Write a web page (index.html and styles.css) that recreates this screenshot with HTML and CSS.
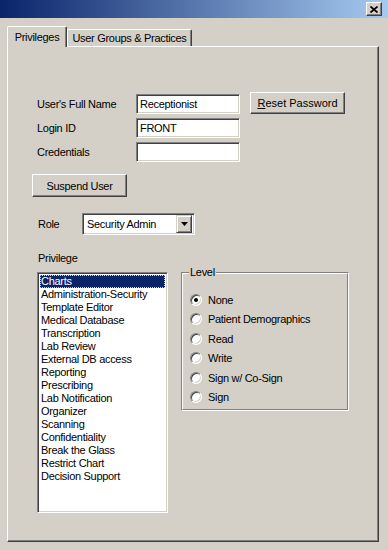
FILE: index.html
```html
<!DOCTYPE html>
<html lang="en">

<head>
    <meta charset="UTF-8">
    <title>User Security</title>
    <link rel="stylesheet" href="styles.css">
</head>

<body>
    <div class="titlebar">
        <div class="close-btn">
            <svg width="8" height="7" viewBox="0 0 8 7">
                <path d="M0.5 0.5 L7.5 6.5 M7.5 0.5 L0.5 6.5" stroke="#000" stroke-width="1.7" fill="none"/>
            </svg>
        </div>
    </div>

    <div class="tabs">
        <div class="tab active">Privileges</div>
        <div class="tab">User Groups &amp; Practices</div>
    </div>

    <div class="panel">
        <div class="fields">
            <label class="field-label">User's Full Name</label>
            <div class="textbox">Receptionist</div>
            <div class="button reset-btn"><u>R</u>eset Password</div>

            <label class="field-label">Login ID</label>
            <div class="textbox">FRONT</div>

            <label class="field-label">Credentials</label>
            <div class="textbox"></div>
        </div>

        <div class="button suspend-btn">Suspend User</div>

        <div class="role-row">
            <label class="role-label">Role</label>
            <div class="combo">
                <span class="combo-text">Security Admin</span>
                <span class="combo-btn">
                    <svg width="7" height="4" viewBox="0 0 7 4"><polygon points="0,0 7,0 3.5,4" fill="#000"/></svg>
                </span>
            </div>
        </div>

        <div class="privilege-label">Privilege</div>

        <div class="lists">
            <ul class="listbox">
                <li class="selected">Charts</li>
                <li>Administration-Security</li>
                <li>Template Editor</li>
                <li>Medical Database</li>
                <li>Transcription</li>
                <li>Lab Review</li>
                <li>External DB access</li>
                <li>Reporting</li>
                <li>Prescribing</li>
                <li>Lab Notification</li>
                <li>Organizer</li>
                <li>Scanning</li>
                <li>Confidentiality</li>
                <li>Break the Glass</li>
                <li>Restrict Chart</li>
                <li>Decision Support</li>
            </ul>

            <div class="group">
                <span class="legend">Level</span>
                <div class="group-inner">
                    <div class="radio-row"><span class="radio checked"><span class="dot"></span></span>None</div>
                    <div class="radio-row"><span class="radio"></span>Patient Demographics</div>
                    <div class="radio-row"><span class="radio"></span>Read</div>
                    <div class="radio-row"><span class="radio"></span>Write</div>
                    <div class="radio-row"><span class="radio"></span>Sign w/ Co-Sign</div>
                    <div class="radio-row"><span class="radio"></span>Sign</div>
                </div>
            </div>
        </div>
    </div>
</body>

</html>
```

FILE: styles.css
```css
body {
    margin: 0;
    width: 388px;
    height: 550px;
    overflow: hidden;
    background-color: #d4d0c8;
    font-family: "Liberation Sans", Arial, sans-serif;
    font-size: 11px;
    letter-spacing: -0.3px;
    color: #000;
}

.titlebar {
    height: 18px;
    background: linear-gradient(to right, #0a246a, #a6caf0);
    display: flex;
    justify-content: flex-end;
    align-items: center;
    padding-right: 6px;
}

.close-btn {
    width: 16px;
    height: 14px;
    box-sizing: border-box;
    background-color: #d4d0c8;
    border: 1px solid;
    border-color: #fff #404040 #404040 #fff;
    box-shadow: inset -1px -1px #808080;
    display: flex;
    justify-content: center;
    align-items: center;
}

.tabs {
    display: flex;
    align-items: flex-end;
    height: 20px;
    margin: 8px 0 0 7px;
}

.tab {
    height: 17px;
    box-sizing: border-box;
    border: 1px solid;
    border-bottom: none;
    border-color: #fff #404040 #404040 #fff;
    box-shadow: inset -1px 0 #808080;
    border-radius: 2px 2px 0 0;
    display: flex;
    align-items: center;
    justify-content: center;
    width: 125px;
    background-color: #d4d0c8;
}

.tab.active {
    width: 60px;
    height: 21px;
    margin-bottom: -1px;
    position: relative;
    z-index: 1;
    padding-bottom: 1px;
}

.panel {
    height: 496px;
    box-sizing: border-box;
    margin: 0 9px 0 7px;
    border: 1px solid;
    border-color: #fff #404040 #404040 #fff;
    box-shadow: inset -1px -1px #808080;
    padding: 47px 0 0 24px;
}

.fields {
    display: grid;
    grid-template-columns: 104px 104px 105px;
    grid-auto-rows: 20px;
    row-gap: 4px;
}

.field-label {
    grid-column: 1;
    padding-left: 5px;
    display: flex;
    align-items: center;
}

.textbox,
.combo,
.listbox {
    box-sizing: border-box;
    background-color: #fff;
    border: 1px solid;
    border-color: #808080 #fff #fff #808080;
    box-shadow: inset 1px 1px #404040, inset -1px -1px #d4d0c8;
}

.textbox {
    grid-column: 2;
    padding-left: 3px;
    display: flex;
    align-items: center;
}

.button {
    box-sizing: border-box;
    border: 1px solid;
    border-color: #fff #404040 #404040 #fff;
    box-shadow: inset -1px -1px #808080;
    display: flex;
    align-items: center;
    justify-content: center;
}

.reset-btn {
    grid-column: 3;
    grid-row: 1;
    height: 22px;
    margin: -2px 0 0 10px;
    letter-spacing: 0;
}

.suspend-btn {
    width: 95px;
    height: 23px;
    margin-top: 12px;
}

.role-row {
    display: flex;
    align-items: center;
    margin-top: 16px;
}

.role-label {
    width: 44px;
    padding-left: 6px;
}

.combo {
    width: 113px;
    height: 22px;
    display: flex;
    align-items: center;
    justify-content: space-between;
    padding: 2px;
}

.combo-text {
    padding-left: 2px;
}

.combo-btn {
    width: 16px;
    height: 18px;
    box-sizing: border-box;
    background-color: #d4d0c8;
    border: 1px solid;
    border-color: #d4d0c8 #404040 #404040 #d4d0c8;
    box-shadow: inset 1px 1px #fff, inset -1px -1px #808080;
    display: flex;
    align-items: center;
    justify-content: center;
}

.privilege-label {
    margin-top: 17px;
    padding-left: 6px;
    line-height: 13px;
}

.lists {
    display: flex;
    align-items: flex-start;
    gap: 13px;
    margin: 7px 0 0 5px;
}

.listbox {
    list-style: none;
    margin: 0;
    width: 131px;
    height: 241px;
    padding: 2px;
}

.listbox li {
    line-height: 13px;
    padding-left: 1px;
    white-space: nowrap;
}

.listbox li.selected {
    background-color: #0a246a;
    color: #fff;
    outline: 1px dotted #d4d0c8;
    outline-offset: -1px;
}

.group {
    position: relative;
    width: 168px;
    height: 139px;
    box-sizing: border-box;
    border: 1px solid;
    border-color: #808080 #fff #fff #808080;
}

.legend {
    position: absolute;
    top: -7px;
    left: 7px;
    padding: 0 1px;
    line-height: 13px;
    background-color: #d4d0c8;
}

.group-inner {
    height: 100%;
    box-sizing: border-box;
    border: 1px solid;
    border-color: #fff #808080 #808080 #fff;
    padding: 16px 0 0 7px;
}

.radio-row {
    height: 19.5px;
    display: flex;
    align-items: center;
}

.radio {
    width: 12px;
    height: 12px;
    box-sizing: border-box;
    border-radius: 50%;
    background-color: #fff;
    border: 1px solid;
    border-color: #808080 #fff #fff #808080;
    box-shadow: inset 1px 1px #404040, inset -1px -1px #d4d0c8;
    margin-right: 6px;
    display: flex;
    align-items: center;
    justify-content: center;
}

.dot {
    width: 4px;
    height: 4px;
    border-radius: 50%;
    background-color: #000;
}
```
